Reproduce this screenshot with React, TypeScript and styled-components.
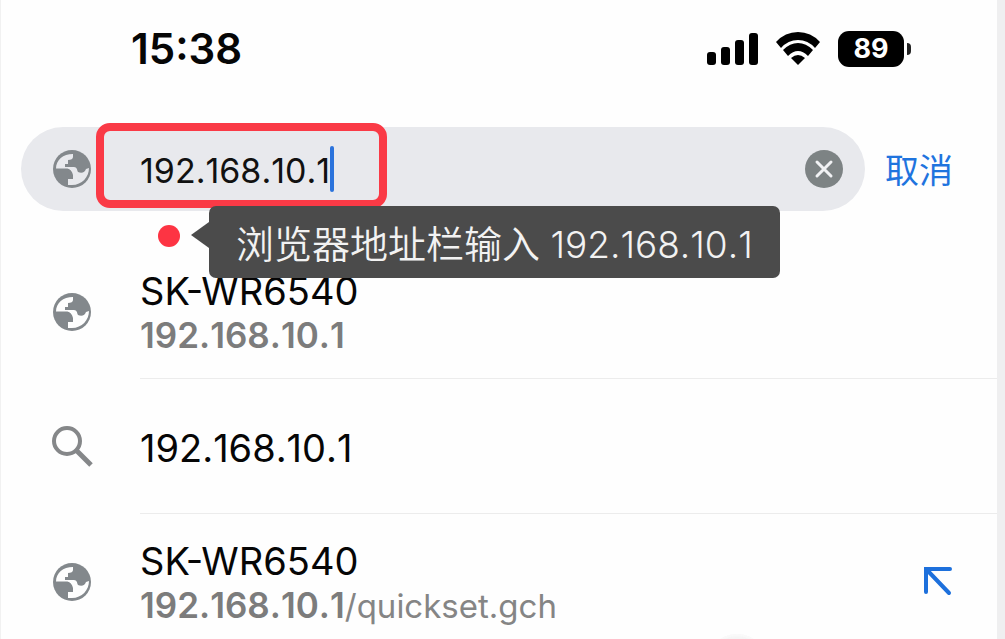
import React, { useState } from 'react';
import styled, { createGlobalStyle } from 'styled-components';

const GlobalStyle = createGlobalStyle`
  * { box-sizing: border-box; }
  body { margin: 0; background: #fefefe; }
  body, button, input { font-family: Inter, 'Noto Sans CJK SC', sans-serif; }
`;

const Page = styled.main`
  position: relative;
  height: 100vh;
  overflow: hidden;
  border-left: 1px solid #f1f1f1;
  border-right: 8px solid #efeff0;
  background: #fefefe;
  color: #060606;
  font-kerning: none;
`;

const StatusBar = styled.header`
  display: flex;
  align-items: center;
  justify-content: space-between;
  height: 98px;
  padding: 0 86px 0 130px;
`;

const Clock = styled.time`
  font-size: 42px;
  line-height: 48px;
  font-weight: 600;
`;

const StatusIcons = styled.div`
  display: flex;
  align-items: center;
  gap: 17px;
`;

const Battery = styled.div`
  position: relative;
  width: 66px;
  height: 36px;
  margin-right: 7px;
  border-radius: 11px;
  background: #000;
  color: #fff;
  font-size: 27px;
  line-height: 36px;
  font-weight: 700;
  text-align: center;

  &::after {
    content: '';
    position: absolute;
    top: 12px;
    right: -7px;
    width: 4px;
    height: 12px;
    border-radius: 0 5px 5px 0;
    background: #222;
  }
`;

const SearchArea = styled.form`
  position: relative;
  display: flex;
  align-items: center;
  gap: 20px;
  padding: 29px 44px 0 20px;
`;

const AddressBar = styled.div`
  display: flex;
  flex: 1;
  align-items: center;
  min-width: 0;
  height: 84px;
  padding: 0 20px 0 30px;
  border-radius: 42px;
  background: #e8e9ed;
`;

const AddressLabel = styled.label`
  display: flex;
  align-items: center;
  gap: 49px;
`;

const AddressInput = styled.input`
  width: 190px;
  height: 48px;
  padding: 2px 0 0;
  border: 0;
  outline: 0;
  background: transparent;
  color: #111;
  font-size: 34px;
  font-kerning: none;
`;

const Caret = styled.span`
  width: 4px;
  height: 46px;
  border-radius: 2px;
  background: #2b73dc;
`;

const ClearButton = styled.button`
  display: flex;
  margin-left: auto;
  padding: 0;
  border: 0;
  background: none;
`;

const CancelButton = styled.button`
  padding: 4px 0 0;
  border: 0;
  background: none;
  color: #1f74de;
  font-size: 34px;
  line-height: 48px;
  white-space: nowrap;
`;

const Highlight = styled.div`
  position: absolute;
  top: 25px;
  left: 95px;
  width: 291px;
  height: 85px;
  border: 8px solid #fa3a46;
  border-radius: 14px;
  pointer-events: none;
`;

const Marker = styled.span`
  position: absolute;
  top: 127px;
  left: 157px;
  width: 22px;
  height: 22px;
  border-radius: 50%;
  background: #fd3443;
`;

const Tooltip = styled.div`
  position: absolute;
  z-index: 1;
  top: 108px;
  left: 208px;
  height: 72px;
  padding: 0 27px;
  border-radius: 7px;
  background: #4b4b4b;
  color: #f2f2f2;
  font-size: 37px;
  line-height: 76px;
  font-weight: 350;
  white-space: nowrap;

  &::before {
    content: '';
    position: absolute;
    top: 16px;
    left: -18px;
    border: solid transparent;
    border-width: 13px 18px 13px 0;
    border-right-color: #4b4b4b;
  }
`;

const TooltipLabel = styled.span`
  font-size: 38px;
`;

const Suggestions = styled.ul`
  margin: 33px 0 0;
  padding: 0;
  list-style: none;
`;

const Suggestion = styled.li`
  display: flex;
  height: 135px;
  padding-left: 50px;
`;

const IconCell = styled.span`
  display: flex;
  flex: 0 0 89px;
  align-items: center;
`;

const SuggestionBody = styled.div`
  display: flex;
  flex: 1;
  align-items: center;
  justify-content: space-between;
  padding-right: 43px;
  border-bottom: 1px solid #ececec;
`;

const SuggestionLink = styled.a`
  display: flex;
  flex-direction: column;
  padding-top: 4px;
  color: inherit;
  text-decoration: none;
`;

const Title = styled.span<{ $kerned: boolean }>`
  font-size: 38px;
  line-height: 44px;
  font-kerning: ${(p) => (p.$kerned ? 'normal' : 'none')};
`;

const Url = styled.span`
  color: #858585;
  font-size: 33px;
  line-height: 44px;
`;

const Host = styled.span`
  color: #7c7c7c;
  font-size: 35px;
  font-weight: 600;
`;

const FillButton = styled.button`
  display: flex;
  padding: 0;
  border: 0;
  background: none;
`;

const FloatingDisc = styled.div`
  position: absolute;
  bottom: -55px;
  left: 706px;
  width: 60px;
  height: 60px;
  border-radius: 50%;
  background: #f5f5f5;
  box-shadow: inset 0 0 2px 2px #fafafa;
`;

function Globe({ land = '#fefefe' }: { land?: string }) {
  return (
    <svg width="40" height="40" viewBox="0 0 40 40" aria-hidden="true">
      <circle cx="21" cy="20" r="19" fill="#83888c" />
      <path
        fill={land}
        d="M5 19.5C5 11 12 5 22 5v3c0 2-2 3-5 3v4h-3v3h9c3 0 3 3 4 5 4 2 7 0 8-3l3-1c0 9-7 17-17 17h-4v-6h5v-4c-1-4-3-6.500-7-6.500z"
      />
    </svg>
  );
}

function SearchIcon() {
  return (
    <svg width="42" height="42" viewBox="0 0 42 42" aria-hidden="true" fill="none" stroke="#858789">
      <circle cx="16" cy="15" r="13" strokeWidth="4" />
      <path d="M25 24l15 15" strokeWidth="5" />
    </svg>
  );
}

function Signal() {
  return (
    <svg width="52" height="34" viewBox="0 0 52 34" aria-hidden="true">
      <rect x="1" y="20" width="9" height="13" rx="3" />
      <rect x="15" y="15" width="9" height="18" rx="3" />
      <rect x="29" y="8" width="9" height="25" rx="3" />
      <rect x="43" y="1" width="9" height="32" rx="3" />
    </svg>
  );
}

function Wifi() {
  return (
    <svg width="46" height="34" viewBox="0 0 46 34" aria-hidden="true">
      <path d="M1 10Q10 0 23 0t22 10l-5 6Q33 8 23 8T6 16z" />
      <path d="M8 18q7-7 15-7t15 7l-5 6q-5-5-10-5t-10 5z" />
      <path d="M16 26q7-6 14 0l-7 7z" />
    </svg>
  );
}

interface Entry {
  title?: string;
  host: string;
  path?: string;
  fill?: boolean;
}

const entries: Entry[] = [
  { title: 'SK-WR6540', host: '192.168.10.1' },
  { host: '192.168.10.1' },
  { title: 'SK-WR6540', host: '192.168.10.1', path: '/quickset.gch', fill: true },
];

export default function App() {
  const [address, setAddress] = useState('192.168.10.1');
  return (
    <Page>
      <GlobalStyle />
      <StatusBar>
        <Clock>15:38</Clock>
        <StatusIcons>
          <Signal />
          <Wifi />
          <Battery>89</Battery>
        </StatusIcons>
      </StatusBar>
      <SearchArea onSubmit={(e) => e.preventDefault()}>
        <AddressBar>
          <AddressLabel>
            <Globe land="#e8e9ed" />
            <AddressInput
              aria-label="地址"
              spellCheck={false}
              value={address}
              onChange={(e) => setAddress(e.target.value)}
            />
          </AddressLabel>
          <Caret />
          <ClearButton type="button" aria-label="清除" onClick={() => setAddress('')}>
            <svg width="42" height="42" viewBox="0 0 42 42" aria-hidden="true">
              <circle cx="21" cy="21" r="19" fill="#7d8384" />
              <path d="M14 14l14 14M28 14L14 28" stroke="#f1f2f4" strokeWidth="3" strokeLinecap="round" />
            </svg>
          </ClearButton>
        </AddressBar>
        <CancelButton type="button">取消</CancelButton>
        <Highlight />
        <Marker />
        <Tooltip role="tooltip">
          <TooltipLabel>浏览器地址栏输入</TooltipLabel> 192.168.10.1
        </Tooltip>
      </SearchArea>
      <Suggestions>
        {entries.map((entry, index) => (
          <Suggestion key={index}>
            <IconCell>{entry.title ? <Globe /> : <SearchIcon />}</IconCell>
            <SuggestionBody>
              <SuggestionLink href="#">
                <Title $kerned={Boolean(entry.title)}>{entry.title ?? entry.host}</Title>
                {entry.title && (
                  <Url>
                    <Host>{entry.host}</Host>
                    {entry.path}
                  </Url>
                )}
              </SuggestionLink>
              {entry.fill && (
                <FillButton type="button" aria-label="填入地址栏">
                  <svg
                    width="32"
                    height="30"
                    viewBox="0 0 32 30"
                    aria-hidden="true"
                    fill="none"
                    stroke="#1d70dc"
                    strokeWidth="4"
                    strokeLinecap="round"
                  >
                    <path d="M4 26V3h24M5 4l22 23" />
                  </svg>
                </FillButton>
              )}
            </SuggestionBody>
          </Suggestion>
        ))}
      </Suggestions>
      <FloatingDisc />
    </Page>
  );
}
